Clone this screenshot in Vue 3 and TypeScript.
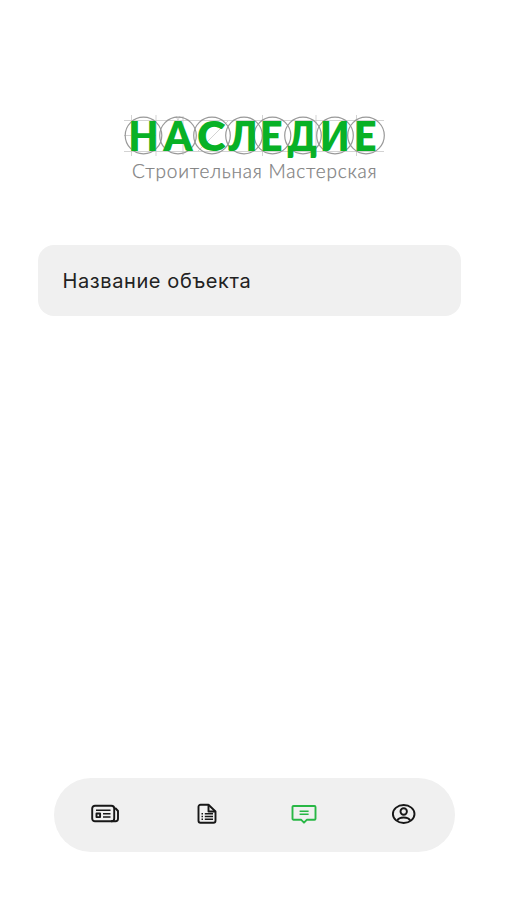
<script setup lang="ts">
interface Glyph { char: string; x: number; width: number; cx: number }

const glyphs: Glyph[] = [
  { char: 'Н', x: 128.500, width: 30, cx: 143.5 },
  { char: 'А', x: 163.5, width: 29, cx: 178 },
  { char: 'С', x: 197, width: 28.500, cx: 212 },
  { char: 'Л', x: 228.500, width: 29, cx: 244 },
  { char: 'Е', x: 260, width: 22.500, cx: 272.5 },
  { char: 'Д', x: 287.500, width: 29.500, cx: 303 },
  { char: 'И', x: 320, width: 29.500, cx: 335 },
  { char: 'Е', x: 354, width: 22.500, cx: 366 },
]
</script>

<template>
  <main class="screen">
    <header class="brand">
      <svg class="logo" width="280" height="80" viewBox="115 108 280 80" role="img" aria-label="Наследие">
        <g class="guides">
          <path d="M124 120.5H384M124 151.5H384M124 135.5H156M131.5 115V156M156 115V156M163 151L180 116M192 151L176 116M198 151L228 121M183 116V155M262.500 115V156M316 115V156M323 151L347 121M356.500 115V156" />
          <circle v-for="(g, i) in glyphs" :key="i" :cx="g.cx" cy="135.500" r="18.300" />
        </g>
        <text v-for="(g, i) in glyphs" :key="i" class="wordmark" :x="g.x" y="150.800" :textLength="g.width" lengthAdjust="spacingAndGlyphs">{{ g.char }}</text>
        <text class="tagline" x="132" y="177.500" textLength="244.500">Строительная Мастерская</text>
      </svg>
    </header>

    <section class="object-card">
      <span class="object-name">Название объекта</span>
    </section>

    <nav class="tabbar">
      <button class="tab" type="button" aria-label="Новости">
        <svg width="30" height="24" viewBox="0 0 30 24">
          <rect x="2.200" y="3.700" width="22" height="15.600" rx="2.800" />
          <path d="M24.500 6.500h1.200l2.300 2.500v7.800a2.500 2.500 0 0 1-2.500 2.500H21" />
          <path class="fine" d="M6 8.200h14.500M13 11.700h7.500M13 15h7.500" />
          <rect x="6.500" y="11.500" width="3.600" height="3.600" />
        </svg>
      </button>
      <button class="tab document" type="button" aria-label="Документы">
        <svg width="24" height="24" viewBox="0 0 24 24">
          <path d="M4.500 2.800h8l7 6.700V18.700a2 2 0 0 1-2 2h-13a2 2 0 0 1-2-2V4.800a2 2 0 0 1 2-2z" />
          <path d="M12.500 2.800v6.700h7" />
          <path class="fine" d="M5.500 11.800h1.500M8.800 11.800h8.200M5.500 14.500h1.500M8.800 14.500h8.200M5.500 17.200h1.500M8.800 17.200h8.200" />
        </svg>
      </button>
      <button class="tab active" type="button" aria-label="Сообщения">
        <svg width="28" height="24" viewBox="0 0 28 24">
          <path d="M2.500 4h21a1 1 0 0 1 1 1v11.700a1 1 0 0 1-1 1H16l-3 3-3-3H2.500a1 1 0 0 1-1-1V5a1 1 0 0 1 1-1z" />
          <path class="fine" d="M8.600 9.200h9M8.600 12.200h9" />
        </svg>
      </button>
      <button class="tab profile" type="button" aria-label="Профиль">
        <svg width="26" height="24" viewBox="0 0 26 24">
          <ellipse cx="12.700" cy="12" rx="10.800" ry="9" />
          <circle cx="12.700" cy="9.500" r="3.200" />
          <path d="M6.200 18.500c2-4 11-4 13 0" />
        </svg>
      </button>
    </nav>
  </main>
</template>

<style>
body { background: #fff; }
</style>

<style scoped>
.screen {
  box-sizing: border-box;
  width: 507px;
  height: 900px;
  padding: 108px 53px 48px 38px;
  display: flex;
  flex-direction: column;
  background: #fff;
  font-family: Inter, "Noto Sans", sans-serif;
}
.brand { height: 80px; padding-left: 77px; }
.logo { display: block; }
.guides { fill: none; stroke: #999; stroke-width: 1.200; }
.guides path { stroke: #c8c8c8; stroke-width: 0.8; }
.wordmark { font: 800 42px Lato, sans-serif; fill: #08b126; }
.tagline { font: 300 19px Lato, sans-serif; fill: #808080; stroke: #808080; stroke-width: 0.250; }
.object-card {
  box-sizing: border-box;
  width: 423px;
  height: 71px;
  margin-top: 57px;
  padding-left: 24.500px;
  display: flex;
  align-items: center;
  border-radius: 16px;
  background: #f0f0f0;
}
.object-name {
  font-size: 20px;
  font-weight: 400;
  color: #222;
  letter-spacing: 0.600px;
  white-space: nowrap;
}
.tabbar {
  box-sizing: border-box;
  width: 401px;
  height: 74px;
  margin: auto 0 0 16px;
  padding: 0 38px 3px 36px;
  display: flex;
  align-items: center;
  justify-content: space-between;
  border-radius: 37px;
  background: #f0f0f0;
}
.tab { display: flex; padding: 0; border: 0; background: none; color: #171717; }
.document { margin-left: 4px; }
.tab svg { fill: none; stroke: currentColor; stroke-width: 1.900; stroke-linejoin: round; }
.tab .fine { stroke-width: 1.400; }
.tab.active { color: #28b745; }
</style>
